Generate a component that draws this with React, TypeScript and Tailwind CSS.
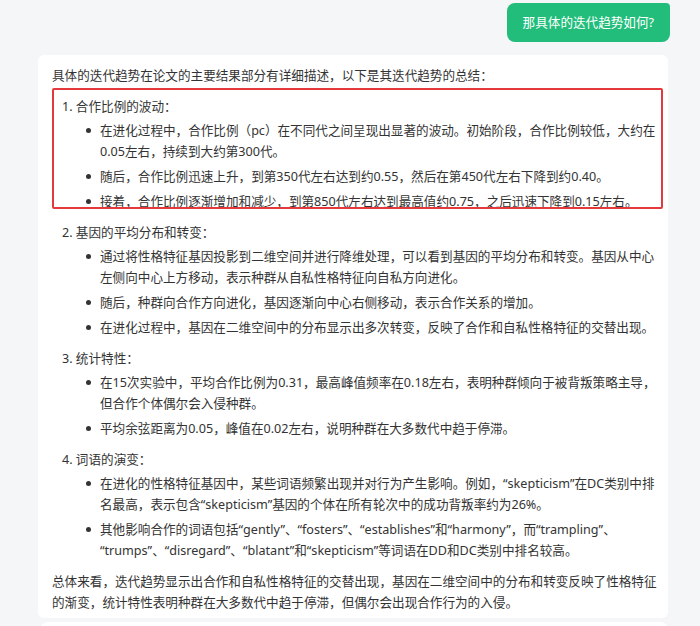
import React from 'react';

type Item = { lines: React.ReactNode[] };
type Section = { title: string; items: Item[] };

const sections: Section[] = [
  {
    title: '1. 合作比例的波动：',
    items: [
      {
        lines: [
          '在进化过程中，合作比例（pc）在不同代之间呈现出显著的波动。初始阶段，合作比例较低，大约在',
          '0.05左右，持续到大约第300代。',
        ],
      },
      { lines: ['随后，合作比例迅速上升，到第350代左右达到约0.55，然后在第450代左右下降到约0.40。'] },
      { lines: ['接着，合作比例逐渐增加和减少，到第850代左右达到最高值约0.75，之后迅速下降到0.15左右。'] },
    ],
  },
  {
    title: '2. 基因的平均分布和转变：',
    items: [
      {
        lines: [
          '通过将性格特征基因投影到二维空间并进行降维处理，可以看到基因的平均分布和转变。基因从中心',
          '左侧向中心上方移动，表示种群从自私性格特征向自私方向进化。',
        ],
      },
      { lines: ['随后，种群向合作方向进化，基因逐渐向中心右侧移动，表示合作关系的增加。'] },
      { lines: ['在进化过程中，基因在二维空间中的分布显示出多次转变，反映了合作和自私性格特征的交替出现。'] },
    ],
  },
  {
    title: '3. 统计特性：',
    items: [
      {
        lines: [
          '在15次实验中，平均合作比例为0.31，最高峰值频率在0.18左右，表明种群倾向于被背叛策略主导，',
          '但合作个体偶尔会入侵种群。',
        ],
      },
      { lines: ['平均余弦距离为0.05，峰值在0.02左右，说明种群在大多数代中趋于停滞。'] },
    ],
  },
  {
    title: '4. 词语的演变：',
    items: [
      {
        lines: [
          '在进化的性格特征基因中，某些词语频繁出现并对行为产生影响。例如，“skepticism”在DC类别中排',
          '名最高，表示包含“skepticism”基因的个体在所有轮次中的成功背叛率约为26%。',
        ],
      },
      {
        lines: [
          '其他影响合作的词语包括“gently”、“fosters”、“establishes”和“harmony”，而“trampling”、',
          '“trumps”、“disregard”、“blatant”和“skepticism”等词语在DD和DC类别中排名较高。',
        ],
      },
    ],
  },
];

function Lines({ lines }: { lines: React.ReactNode[] }) {
  return (
    <div>
      {lines.map((l, i) => (
        <div key={i} className="whitespace-nowrap">
          {l}
        </div>
      ))}
    </div>
  );
}

export default function App() {
  return (
    <div
      className="w-[700px] h-[626px] overflow-hidden bg-[#f5f6f8] text-[#333] text-[12.6px] leading-[21px]"
      style={{ fontFamily: '"Noto Sans", "Noto Sans CJK SC", sans-serif' }}
    >
      {/* 用户提问 */}
      <div className="flex justify-end pt-[3px] pr-[30px]">
        <div className="bg-[#22bd7b] text-white rounded-lg rounded-tr-sm px-[16px] py-[9px]">
          那具体的迭代趋势如何?
        </div>
      </div>

      {/* 回答 */}
      <div className="relative mt-[13px] ml-[38px] mr-[32px] bg-white rounded-md px-[14px] pt-[10px] pb-[5px] flex flex-col gap-[10px]">
        <p>具体的迭代趋势在论文的主要结果部分有详细描述，以下是其迭代趋势的总结：</p>

        {sections.map((s) => (
          <div key={s.title}>
            <div className="pl-[10px]">{s.title}</div>
            <ul className="mt-[3px] flex flex-col gap-[4px]">
              {s.items.map((it, i) => (
                <li key={i} className="flex">
                  <span className="w-[48px] shrink-0 flex justify-end pr-[9px] pt-[8px]">
                    <span className="w-[5px] h-[5px] rounded-full bg-[#333]" />
                  </span>
                  <Lines lines={it.lines} />
                </li>
              ))}
            </ul>
          </div>
        ))}

        <Lines
          lines={[
            '总体来看，迭代趋势显示出合作和自私性格特征的交替出现，基因在二维空间中的分布和转变反映了性格特征',
            '的渐变，统计特性表明种群在大多数代中趋于停滞，但偶尔会出现合作行为的入侵。',
          ]}
        />

        {/* 红色标注框 */}
        <div className="absolute left-[14px] top-[33px] w-[611px] h-[121px] border-2 border-[#e3393c] rounded-[2px] pointer-events-none" />
      </div>

      <div className="mt-[4px] ml-[40px] mr-[32px] h-[40px] bg-white rounded-lg" />
    </div>
  );
}
